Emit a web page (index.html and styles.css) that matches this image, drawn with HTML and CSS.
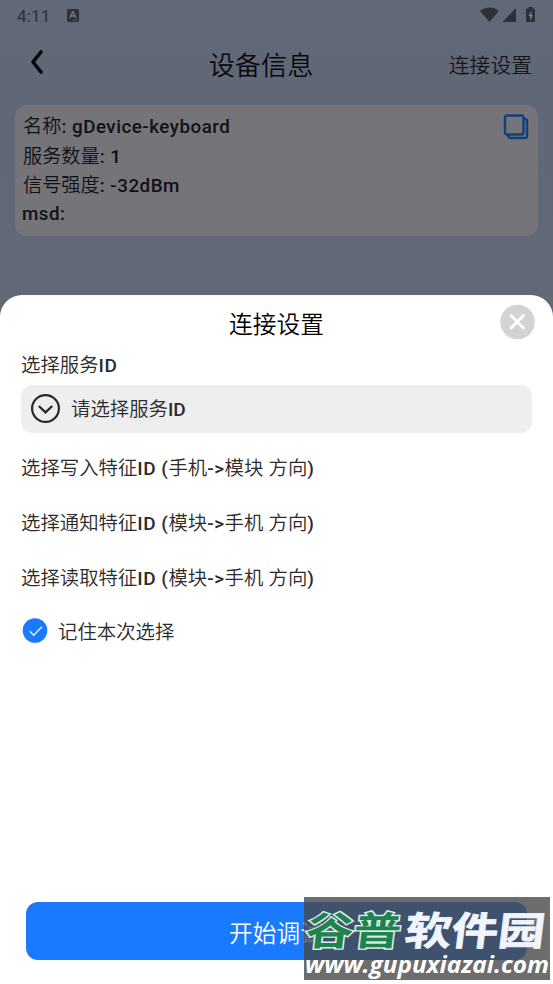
FILE: index.html
```html
<!DOCTYPE html>
<html lang="zh-CN">
<head>
<meta charset="utf-8">
<title>设备信息</title>
<link rel="stylesheet" href="styles.css">
</head>
<body>
<div class="page">
  <div class="status">
    <span class="clock">4:11</span>
    <svg class="keyboard" width="12" height="13" viewBox="0 0 12 13"><rect width="12" height="13" rx="1.500" fill="#2d3139"/><path d="M3 9 5.600 3h.8L9 9M4 7h4" fill="none" stroke="#727984" stroke-width="1.400"/><path d="M6 11.200h4" stroke="#727984" stroke-dasharray="1 .6"/></svg>
    <svg class="signals" width="56" height="18" viewBox="0 0 56 18"><path d="M0 3.800Q9.500-2.800 19 3.800L9.500 15zM36 1v14H22.500z" fill="#2c3037"/><path d="M48.500 0h4v1.500H54q1 0 1 1V14q0 1-1 1h-7q-1 0-1-1V2.500q0-1 1-1h1.500z" fill="#2c3037"/><path d="M51.500 4 48.500 9h1.800v4.500l2.700-5.500h-1.800z" fill="#7c828c"/></svg>
  </div>
  <header class="nav">
    <svg class="back" width="16" height="26" viewBox="0 0 16 26"><path d="M12 3 4 13l8 10" fill="none" stroke="#050609" stroke-width="3.600" stroke-linecap="round" stroke-linejoin="round"/></svg>
    <h1>设备信息</h1>
    <span class="nav-link">连接设置</span>
  </header>
  <section class="card">
    <div class="info">
      <p>名称<b>: gDevice-keyboard</b></p>
      <p>服务数量<b>: 1</b></p>
      <p>信号强度<b>: -32dBm</b></p>
      <p class="last"><b>msd:</b></p>
    </div>
    <svg class="copy" width="26" height="26" viewBox="0 0 26 26" fill="none" stroke="#163d7d" stroke-width="2.400"><path d="M5.500 21v1q0 2 2 2H22q2 0 2-2V7q0-2-2-2h-1"/><rect x="2" y="1.500" width="18.500" height="19" rx="2"/></svg>
  </section>
</div>
<main class="sheet">
  <div class="sheet-head">
    <h2>连接设置</h2>
    <svg class="close" width="36" height="36" viewBox="0 0 36 36"><circle cx="18.500" cy="18" r="17.300" fill="#d3d3d3"/><path d="m12 11.500 12.500 12.500m0-12.500L12 24" stroke="#fff" stroke-width="3" stroke-linecap="round"/></svg>
  </div>
  <p class="label first">选择服务<b>ID</b></p>
  <div class="select">
    <svg width="30" height="30" viewBox="0 0 30 30" fill="none" stroke="#292929"><circle cx="15.500" cy="14.500" r="13.400" stroke-width="2.200"/><path d="m8.800 12 6.700 6.300 6.700-6.300" stroke-width="2.300"/></svg>
    <span>请选择服务<b>ID</b></span>
  </div>
  <p class="label">选择写入特征<b>ID (</b>手机<b>-&gt;</b>模块<b> </b>方向<b>)</b></p>
  <p class="label">选择通知特征<b>ID (</b>模块<b>-&gt;</b>手机<b> </b>方向<b>)</b></p>
  <p class="label">选择读取特征<b>ID (</b>模块<b>-&gt;</b>手机<b> </b>方向<b>)</b></p>
  <div class="remember">
    <svg width="26" height="26" viewBox="0 0 26 26"><circle cx="13" cy="12.500" r="12.300" fill="#1979ff"/><path d="m7.800 13.300 3.900 4 8.300-8.500" fill="none" stroke="#e8f2ff" stroke-width="1.400"/></svg>
    <span>记住本次选择</span>
  </div>
  <div class="start">开始调试</div>
</main>
<div class="mark">
  <svg width="246" height="83" viewBox="0 0 246 83">
    <g class="mark-cn" transform="translate(6 2) skewX(-7) scale(1 .93)">
      <text class="green" x="0" y="49" textLength="95" lengthAdjust="spacingAndGlyphs">谷普</text>
      <text class="white" x="99" y="49" textLength="140" lengthAdjust="spacingAndGlyphs">软件园</text>
    </g>
    <text class="url" x="1" y="76" textLength="244" lengthAdjust="spacingAndGlyphs">www.gupuxiazai.com</text>
  </svg>
</div>
</body>
</html>
```
FILE: styles.css
```css
* { box-sizing: border-box; }
body {
  margin: 0;
  width: 553px;
  height: 984px;
  overflow: hidden;
  position: relative;
  display: flex;
  flex-direction: column;
  background: #626975;
  font-family: Roboto, "Noto Sans CJK SC", sans-serif;
  font-size: 19.400px;
  font-weight: 350;
}
p, h1, h2 { margin: 0; font-weight: 350; }
.page {
  height: 317px;
  flex: none;
  background: linear-gradient(#616877, #606776 35%, #616978 75%, #626975);
}
.status {
  height: 31px;
  display: flex;
  align-items: center;
  padding: 0 17px;
}
.clock {
  width: 50px;
  font-size: 17px;
  font-weight: 400;
  color: #2d3139;
  letter-spacing: .2px;
}
.signals { margin-left: auto; }
.nav {
  height: 74px;
  display: grid;
  grid-template-columns: 120px 1fr 120px;
  align-items: center;
  padding: 0 21px 7px 29px;
}
.nav h1 {
  font-size: 26.200px;
  line-height: 38px;
  text-align: center;
  color: #08090d;
  padding: 2px 39px 0 0;
}
.back { margin-top: -5px; }
.nav-link {
  font-size: 20.800px;
  text-align: right;
  color: #15171d;
  padding-bottom: 2px;
}
.card {
  height: 131px;
  margin: 0 15px;
  padding: 8px 9px 0 8px;
  border-radius: 12px;
  background: #757479;
  display: flex;
  justify-content: space-between;
  color: #111216;
}
.info { margin-top: -1px; }
.info p { height: 29.500px; line-height: 29.500px; font-size: 19.200px; }
b { font-weight: 500; }
.info b { font-size: 18.800px; letter-spacing: .5px; }
.info .last { height: 26px; line-height: 26px; margin-left: -1px; }
.copy { margin-top: 1px; }
.sheet {
  flex: 1;
  margin-top: -22px;
  border-radius: 22px 22px 0 0;
  background: #fff;
  padding: 0 21px;
  color: #2b2b2b;
  display: flex;
  flex-direction: column;
}
.sheet-head {
  height: 56px;
  display: grid;
  grid-template-columns: 36px 1fr 36px;
  align-items: center;
  margin-right: -3px;
}
.sheet-head h2 {
  grid-column: 2;
  text-align: center;
  font-size: 23.700px;
  line-height: 34px;
  color: #000;
  padding: 3px 3px 0 0;
}
.close { margin-top: -2px; }
.label { height: 55px; line-height: 57px; white-space: nowrap; }
.label b { font-size: 19px; letter-spacing: .5px; }
.first { height: 34px; line-height: 29px; }
.select {
  height: 48px;
  margin-bottom: 7px;
  padding-left: 9px;
  border-radius: 12px;
  background: #eee;
  display: flex;
  align-items: center;
  gap: 11px;
}
.select span { margin-top: -4px; }
.select b { font-size: 19px; }
.remember {
  height: 51px;
  margin-left: 1px;
  display: flex;
  align-items: center;
  gap: 10px;
}
.start {
  height: 58px;
  margin: auto 5px 24px;
  border-radius: 12px;
  background: #1979ff;
  color: #fff;
  font-size: 23.700px;
  line-height: 64px;
  text-align: center;
}
.mark {
  position: absolute;
  left: 304px;
  top: 897px;
  width: 246px;
  height: 83px;
  background: rgba(72, 72, 72, .8);
}
.mark svg { display: block; }
.mark text { font-weight: 700; }
.mark-cn text { font-family: "Noto Sans CJK SC", sans-serif; font-size: 42px; }
.mark .green { fill: #20834f; stroke: #d8eee3; stroke-width: 3px; paint-order: stroke; }
.mark .white { fill: #f0f5ff; stroke: #f0f5ff; stroke-width: .8px; }
.mark .url { fill: #fff; font-family: "Open Sans", sans-serif; font-size: 23px; font-style: italic; }
```
